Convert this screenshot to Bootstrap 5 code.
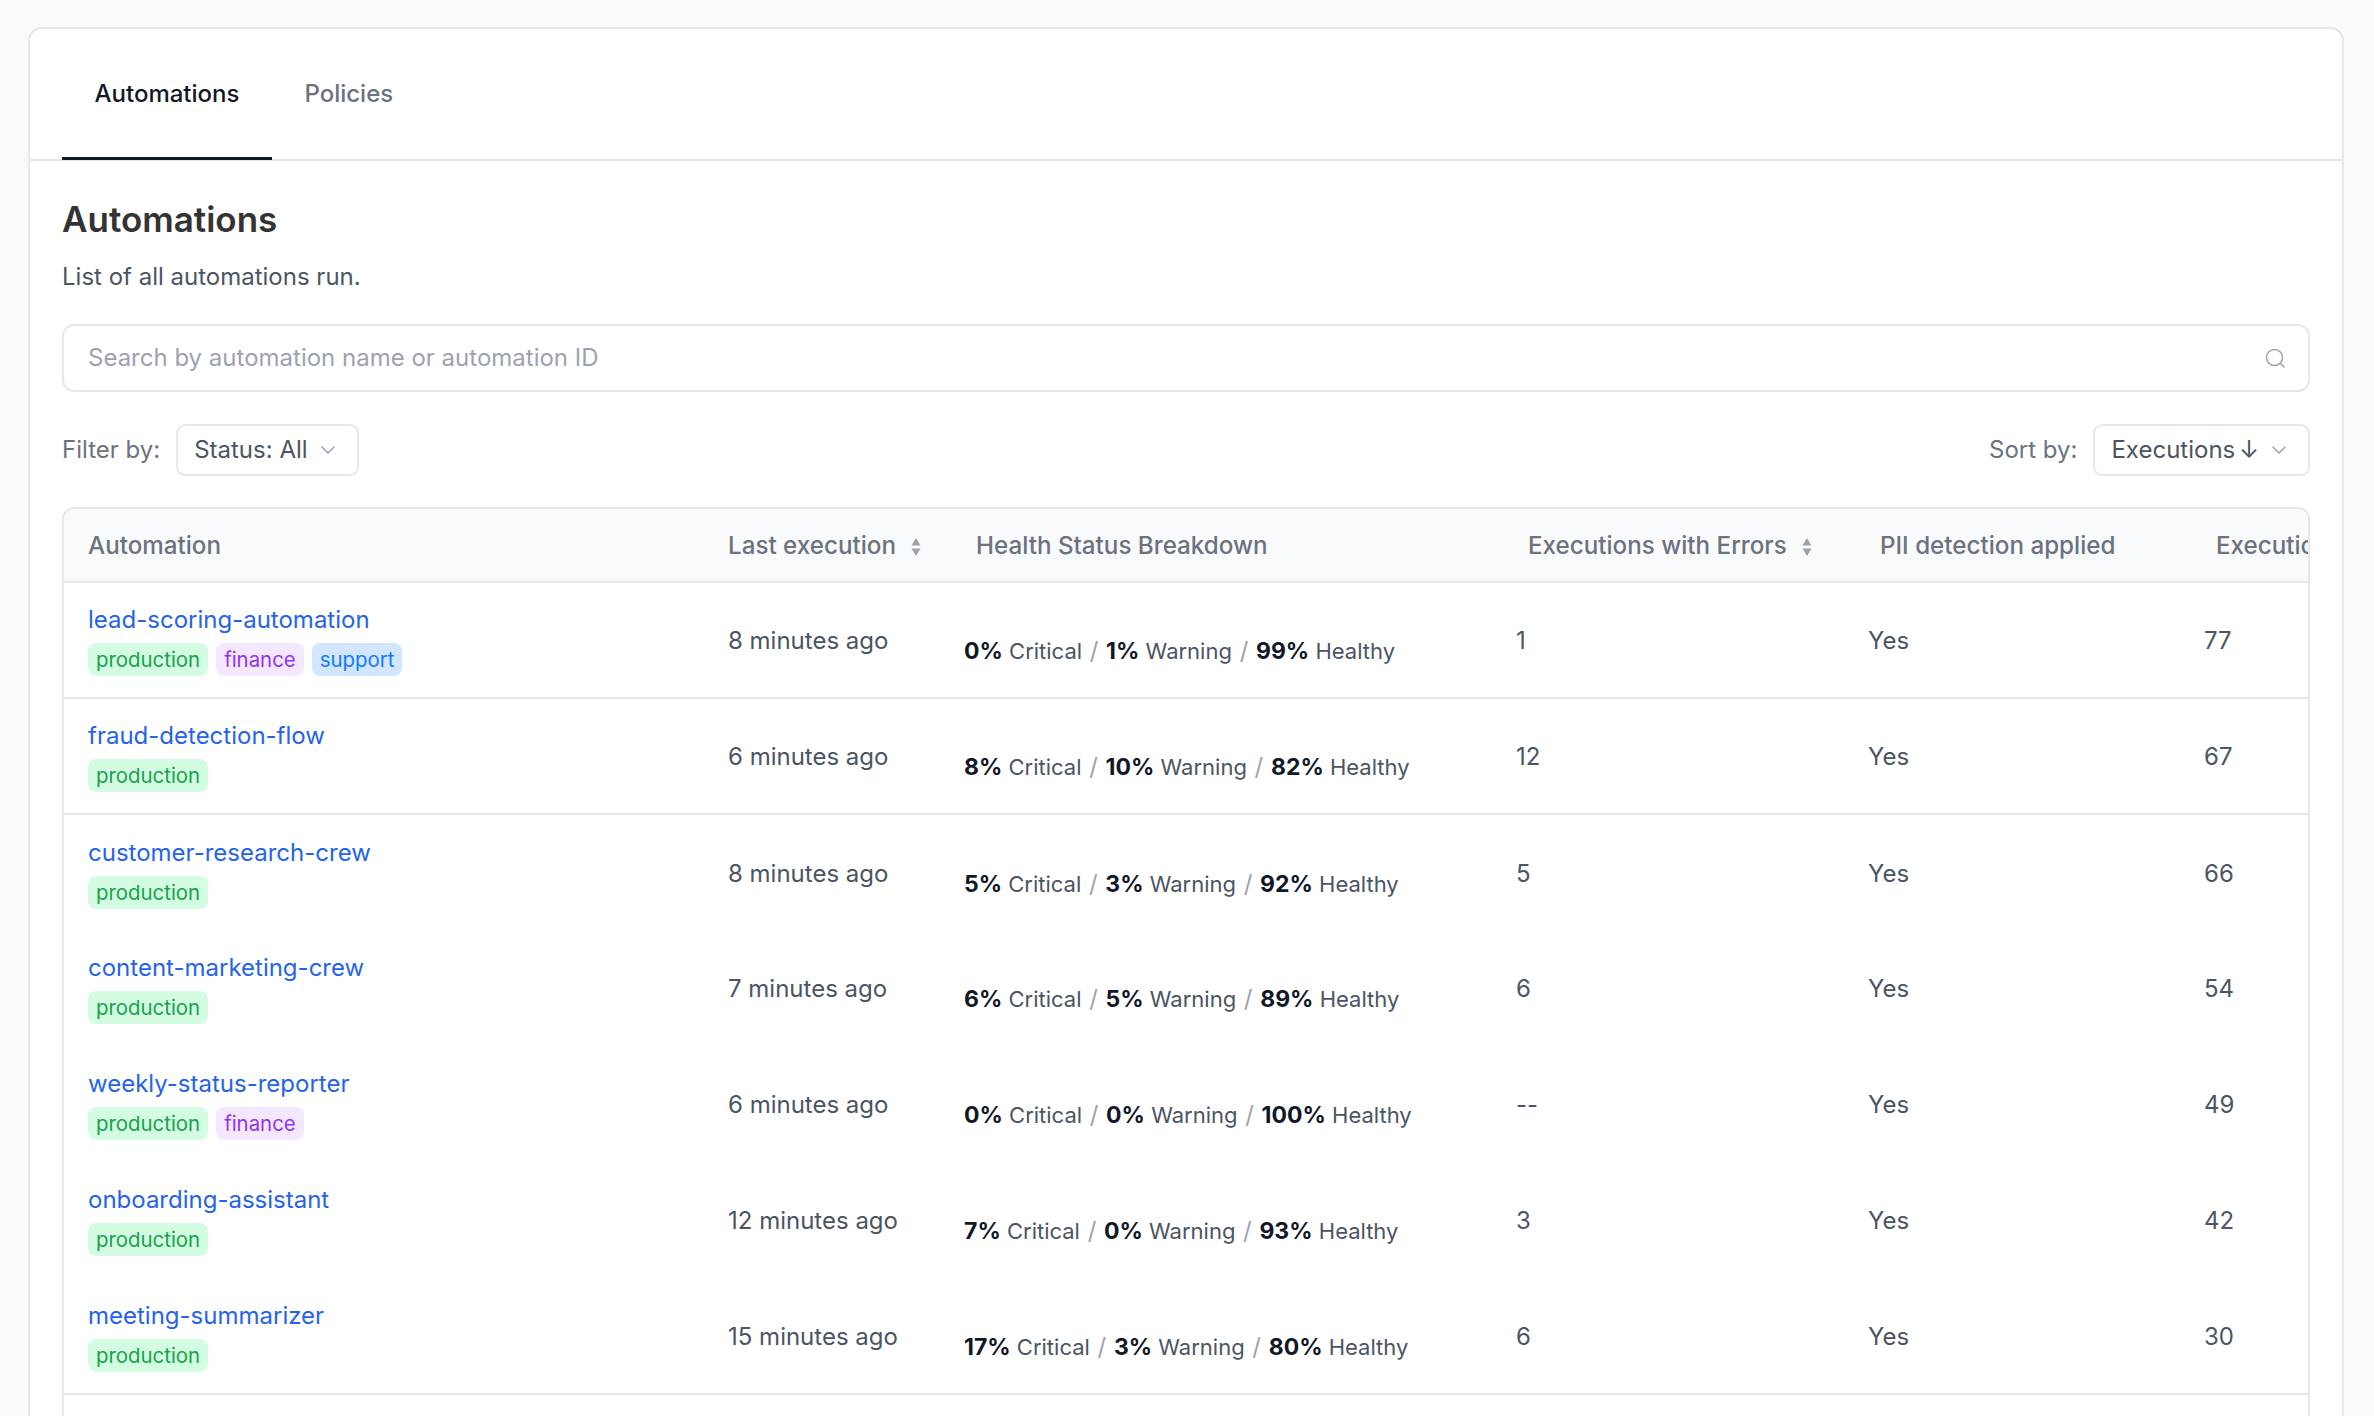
<!DOCTYPE html>
<html lang="en">
<head>
    <meta charset="UTF-8">
    <title>Automations</title>
    <link rel="stylesheet" href="https://cdn.jsdelivr.net/npm/bootstrap@5.3.0/dist/css/bootstrap.min.css">
    <style>
        html, body { height: 100%; overflow: hidden; }
        body {
            font-family: Inter, "Liberation Sans", sans-serif;
            font-size: 24px;
            background-color: #fafafa;
            color: #4b5563;
            padding: 27px 30px 0 28px;
        }
        .panel {
            background: #fff;
            border: 2px solid #e5e7eb;
            border-radius: 14px;
            min-height: 1500px;
        }
        .tabs {
            height: 132px;
            padding: 0 32px;
            border-bottom: 2px solid #e5e7eb;
        }
        .tabs .nav-link {
            height: 131px;
            padding: 0 32.5px;
            line-height: 129px;
            font-weight: 500;
            color: #6b7280;
            border-radius: 0;
        }
        .tabs .nav-link.active {
            color: #111827;
            border-bottom: 3px solid #111827;
        }
        .content { padding: 0 32px; }
        h1 {
            font-size: 35px;
            font-weight: 600;
            color: #333;
            line-height: 44px;
            margin: 36px 0 0;
        }
        .lead-text { font-size: 24px; line-height: 32px; margin: 19.5px 0 0; }
        .search { position: relative; margin-top: 31px; }
        .search input {
            height: 68px;
            font-size: 24px;
            padding: 0 60px 0 24px;
            border: 2px solid #e5e7eb;
            border-radius: 12px;
            color: #4b5563;
        }
        .search input::placeholder { color: #9ca3af; }
        .search svg { position: absolute; right: 25px; top: 24px; }
        .filters { margin-top: 32px; height: 52px; }
        .filter-label { color: #6b7280; }
        .filter-btn {
            height: 52px;
            padding: 0 22px 0 16px;
            gap: 13px;
            font-size: 24px;
            color: #4b5563;
            background: #fff;
            border: 2px solid #e5e7eb;
            border-radius: 9px;
        }
        .filter-btn .down { margin-left: -3px; }
        .table-wrap {
            margin-top: 31.5px;
            border: 2px solid #e5e7eb;
            border-radius: 12px 12px 0 0;
            overflow: hidden;
        }
        .table-wrap table {
            table-layout: fixed;
            width: 2428px;
            margin: 0;
            font-size: 24px;
            --bs-table-color: #4b5563;
        }
        .table-wrap th {
            height: 73px;
            padding: 3px 24px 0;
            font-size: 24.2px;
            font-weight: 500;
            color: #6b7280;
            background: #f9fafb;
            border-bottom: 2px solid #e5e7eb;
            vertical-align: middle;
            white-space: nowrap;
        }
        .table-wrap td {
            height: 116px;
            padding: 0 24px;
            vertical-align: middle;
            border-bottom: 0;
            white-space: nowrap;
        }
        .table-wrap tr.ruled td { border-bottom: 2px solid #e5e7eb; }
        .table-wrap td.when { padding-top: 2px; }
        .table-wrap td.tight { padding-left: 12px; padding-top: 2px; }
        .table-wrap td.health { padding-left: 12px; padding-top: 22px; font-size: 22px; }
        .health b { font-size: 23px; font-weight: 700; color: #111827; }
        .health i { font-size: 24px; font-style: normal; color: #9ca3af; margin: 0 1.5px; }
        .name { color: #2563eb; text-decoration: none; display: block; line-height: 32px; }
        .tags { margin-top: 7px; }
        .tags .badge {
            font-size: 20.4px;
            font-weight: 400;
            line-height: 33px;
            padding: 0 8px;
            border-radius: 8px;
        }
        .tag-prod { background: #d3fce3; color: #16a34a; }
        .tag-fin { background: #f3e8ff; color: #9333ea; }
        .tag-sup { background: #d3e6ff; color: #0f7bff; }
        .sort-icon { margin-left: 15px; vertical-align: -2px; }
    </style>
</head>
<body>
    <div class="panel">
        <ul class="nav tabs">
            <li class="nav-item"><a class="nav-link active" href="#">Automations</a></li>
            <li class="nav-item"><a class="nav-link" href="#">Policies</a></li>
        </ul>

        <div class="content">
            <h1>Automations</h1>
            <p class="lead-text">List of all automations run.</p>

            <div class="search">
                <input class="form-control" type="text" placeholder="Search by automation name or automation ID">
                <svg width="20" height="20" viewBox="0 0 20 20" fill="none" stroke="#9ca3af" stroke-width="1.5" stroke-linecap="round"><circle cx="9.5" cy="9.5" r="8"/><path d="M15.5 15.5 19 19"/></svg>
            </div>

            <div class="filters d-flex justify-content-between align-items-center">
                <div class="d-flex align-items-center gap-3">
                    <span class="filter-label">Filter by:</span>
                    <button class="filter-btn d-flex align-items-center" type="button">Status: All
                        <svg width="14" height="8" viewBox="0 0 14 8" fill="none" stroke="#9ca3af" stroke-width="1.5" stroke-linecap="round" stroke-linejoin="round"><path d="M1 1l6 6 6-6"/></svg>
                    </button>
                </div>
                <div class="d-flex align-items-center gap-3">
                    <span class="filter-label">Sort by:</span>
                    <button class="filter-btn d-flex align-items-center" type="button"><span>Executions <span class="down">↓</span></span>
                        <svg width="14" height="8" viewBox="0 0 14 8" fill="none" stroke="#9ca3af" stroke-width="1.5" stroke-linecap="round" stroke-linejoin="round"><path d="M1 1l6 6 6-6"/></svg>
                    </button>
                </div>
            </div>

            <div class="table-wrap">
                <table class="table">
                    <colgroup>
                        <col style="width:640px"><col style="width:248px"><col style="width:552px"><col style="width:352px"><col style="width:336px"><col style="width:300px">
                    </colgroup>
                    <thead>
                        <tr>
                            <th>Automation</th>
                            <th>Last execution<svg class="sort-icon" width="10" height="18" viewBox="0 0 10 18" fill="#9ca3af"><path d="M5 0l4.5 7.5h-9zM5 18l-4.5-7.5h9z"/></svg></th>
                            <th>Health Status Breakdown</th>
                            <th>Executions with Errors<svg class="sort-icon" width="10" height="18" viewBox="0 0 10 18" fill="#9ca3af"><path d="M5 0l4.5 7.5h-9zM5 18l-4.5-7.5h9z"/></svg></th>
                            <th>PII detection applied</th>
                            <th>Executions</th>
                        </tr>
                    </thead>
                    <tbody>
                        <tr class="ruled">
                            <td><a class="name" href="#">lead-scoring-automation</a><div class="tags d-flex gap-2"><span class="badge tag-prod">production</span><span class="badge tag-fin">finance</span><span class="badge tag-sup">support</span></div></td>
                            <td class="when">8 minutes ago</td>
                            <td class="health"><b>0%</b> Critical <i>/</i> <b>1%</b> Warning <i>/</i> <b>99%</b> Healthy</td>
                            <td class="tight">1</td><td class="tight">Yes</td><td class="tight">77</td>
                        </tr>
                        <tr class="ruled">
                            <td><a class="name" href="#">fraud-detection-flow</a><div class="tags d-flex gap-2"><span class="badge tag-prod">production</span></div></td>
                            <td class="when">6 minutes ago</td>
                            <td class="health"><b>8%</b> Critical <i>/</i> <b>10%</b> Warning <i>/</i> <b>82%</b> Healthy</td>
                            <td class="tight">12</td><td class="tight">Yes</td><td class="tight">67</td>
                        </tr>
                        <tr>
                            <td><a class="name" href="#">customer-research-crew</a><div class="tags d-flex gap-2"><span class="badge tag-prod">production</span></div></td>
                            <td class="when">8 minutes ago</td>
                            <td class="health"><b>5%</b> Critical <i>/</i> <b>3%</b> Warning <i>/</i> <b>92%</b> Healthy</td>
                            <td class="tight">5</td><td class="tight">Yes</td><td class="tight">66</td>
                        </tr>
                        <tr>
                            <td><a class="name" href="#">content-marketing-crew</a><div class="tags d-flex gap-2"><span class="badge tag-prod">production</span></div></td>
                            <td class="when">7 minutes ago</td>
                            <td class="health"><b>6%</b> Critical <i>/</i> <b>5%</b> Warning <i>/</i> <b>89%</b> Healthy</td>
                            <td class="tight">6</td><td class="tight">Yes</td><td class="tight">54</td>
                        </tr>
                        <tr>
                            <td><a class="name" href="#">weekly-status-reporter</a><div class="tags d-flex gap-2"><span class="badge tag-prod">production</span><span class="badge tag-fin">finance</span></div></td>
                            <td class="when">6 minutes ago</td>
                            <td class="health"><b>0%</b> Critical <i>/</i> <b>0%</b> Warning <i>/</i> <b>100%</b> Healthy</td>
                            <td class="tight">--</td><td class="tight">Yes</td><td class="tight">49</td>
                        </tr>
                        <tr>
                            <td><a class="name" href="#">onboarding-assistant</a><div class="tags d-flex gap-2"><span class="badge tag-prod">production</span></div></td>
                            <td class="when">12 minutes ago</td>
                            <td class="health"><b>7%</b> Critical <i>/</i> <b>0%</b> Warning <i>/</i> <b>93%</b> Healthy</td>
                            <td class="tight">3</td><td class="tight">Yes</td><td class="tight">42</td>
                        </tr>
                        <tr class="ruled">
                            <td><a class="name" href="#">meeting-summarizer</a><div class="tags d-flex gap-2"><span class="badge tag-prod">production</span></div></td>
                            <td class="when">15 minutes ago</td>
                            <td class="health"><b>17%</b> Critical <i>/</i> <b>3%</b> Warning <i>/</i> <b>80%</b> Healthy</td>
                            <td class="tight">6</td><td class="tight">Yes</td><td class="tight">30</td>
                        </tr>
                        <tr><td></td><td></td><td></td><td></td><td></td><td></td></tr>
                    </tbody>
                </table>
            </div>
        </div>
    </div>
    <script src="https://cdn.jsdelivr.net/npm/bootstrap@5.3.0/dist/js/bootstrap.bundle.min.js"></script>
</body>
</html>
